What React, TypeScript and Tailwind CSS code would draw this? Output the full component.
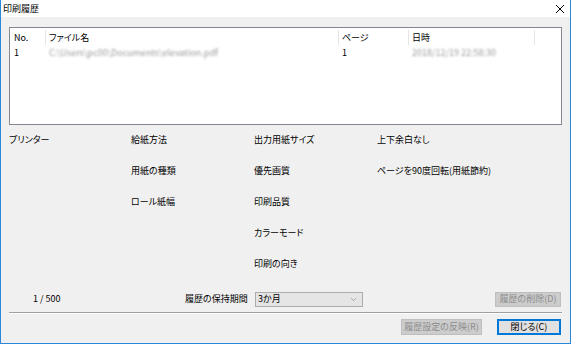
import { ChevronDown } from "lucide-react";

const font = "[font-family:'Noto_Sans_CJK_JP',sans-serif] [font-feature-settings:'palt']";

const details: (string | null)[][] = [
  ["プリンター", "給紙方法", "出力用紙サイズ", "上下余白なし"],
  [null, "用紙の種類", "優先画質", "ページを90度回転(用紙節約)"],
  [null, "ロール紙幅", "印刷品質", null],
  [null, null, "カラーモード", null],
  [null, null, "印刷の向き", null],
];

const App = () => {
  return (
    <div className={`w-[571px] h-[344px] flex flex-col bg-[#f0f0f0] border-x border-b border-[#2b88d8] text-[9px] text-black ${font}`}>
      {/* Title bar */}
      <div className="h-[17px] bg-white flex items-center justify-between pl-[2px] pr-[5px]">
        <span className="leading-none">印刷履歴</span>
        <svg width="10" height="10" viewBox="0 0 10 10" className="mt-[1px]">
          <path d="M1 1 L9 9 M9 1 L1 9" stroke="#000" strokeWidth="1" />
        </svg>
      </div>

      <div className="flex-1 flex flex-col px-[8px] pt-[10px]">
        {/* History list */}
        <div className="h-[98px] bg-white border border-[#828790] pt-[2px]">
          <div className="flex h-[15px] items-center">
            <div className="w-[36px] h-full flex items-center pl-[4px] border-r border-[#e5e5e5]">No.</div>
            <div className="w-[293px] h-full flex items-center pl-[3px] border-r border-[#e5e5e5]">ファイル名</div>
            <div className="w-[70px] h-full flex items-center pl-[3px] border-r border-[#e5e5e5]">ページ</div>
            <div className="w-[126px] h-full flex items-center pl-[3px] border-r border-[#e5e5e5]">日時</div>
          </div>
          <div className="flex h-[15px] items-center">
            <div className="w-[36px] pl-[4px]">1</div>
            <div className="w-[293px] pl-[3px] text-[#9a9a9a] blur-[1.2px]">C:\Users\pc00\Documents\elevation.pdf</div>
            <div className="w-[70px] pl-[3px]">1</div>
            <div className="w-[126px] pl-[3px] text-[#9a9a9a] blur-[1.2px]">2018/12/19 22:58:30</div>
          </div>
        </div>

        {/* Details */}
        <div className="grid grid-cols-[122px_123px_123px_1fr] auto-rows-[31px] mt-[8px]">
          {details.flatMap((row, r) =>
            row.map((cell, c) => (
              <div key={`${r}-${c}`} className="leading-[14px]">
                {cell ?? ""}
              </div>
            ))
          )}
        </div>

        {/* Retention row */}
        <div className="flex items-center h-[16px] mt-[3px]">
          <span className="w-[176px] pl-[24px]">1 / 500</span>
          <span className="w-[70px]">履歴の保持期間</span>
          <div className="w-[108px] h-[15px] bg-[#e5e5e5] border border-[#acacac] flex items-center justify-between pl-[2px] pr-[4px]">
            <span>3か月</span>
            <ChevronDown size={9} strokeWidth={1.5} className="text-[#777]" />
          </div>
          <div className="flex-1" />
          <button className="w-[66px] h-[15px] bg-[#cccccc] border border-[#bfbfbf] text-[#8c8c8c] flex items-center justify-center mr-[1px]">
            履歴の削除(D)
          </button>
        </div>

        <div className="h-px bg-[#a0a0a0] mt-[5px] border-b border-white box-content" />

        {/* Dialog buttons */}
        <div className="flex justify-end gap-[15px] mt-[5px] mr-[1px]">
          <button className="w-[81px] h-[16px] bg-[#cccccc] border border-[#bfbfbf] text-[#8c8c8c] flex items-center justify-center">
            履歴設定の反映(R)
          </button>
          <button className="w-[64px] h-[16px] bg-[#e1e1e1] border-2 border-[#0078d7] flex items-center justify-center">
            閉じる(C)
          </button>
        </div>
      </div>
    </div>
  );
};

export default App;
